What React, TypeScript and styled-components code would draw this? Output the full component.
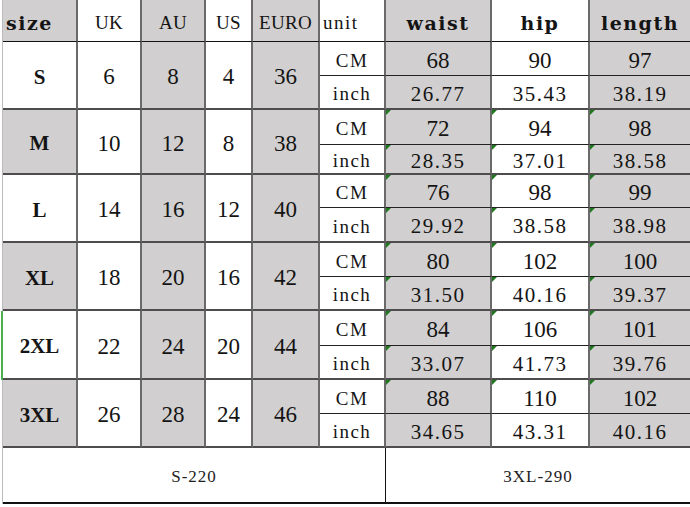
import React from "react";
import styled, { createGlobalStyle, css } from "styled-components";

const GlobalStyle = createGlobalStyle`
	html, body {
		margin: 0;
		padding: 0;
		background: #ffffff;
	}
`;

type Edge = "head" | "sub" | "row" | "foot";
type Face = "bold" | "label" | "headLabel" | "headBold" | "big" | "dec";

const GRAY = "#d1cfcf";

const faces: Record<Face, ReturnType<typeof css>> = {
	bold: css`
		font-family: "Liberation Serif", serif;
		font-weight: bold;
		font-size: 21px;
	`,
	label: css`
		font-family: "Liberation Serif", serif;
		font-size: 19px;
		letter-spacing: 1.5px;
	`,
	headLabel: css`
		font-family: "Liberation Serif", serif;
		font-size: 19px;
		letter-spacing: 0.3px;
	`,
	headBold: css`
		font-family: "DejaVu Serif", serif;
		font-weight: bold;
		font-size: 19px;
		letter-spacing: 1.5px;
	`,
	big: css`
		font-family: "Liberation Serif", serif;
		font-size: 23px;
	`,
	dec: css`
		font-family: "Liberation Serif", serif;
		font-size: 21px;
		letter-spacing: 1.5px;
	`,
};

const edges: Record<Edge, string> = {
	head: "1px solid #111",
	sub: "1px solid #222",
	row: "2px solid #4d4d4d",
	foot: "2px solid #111",
};

const Sheet = styled.div`
	margin-left: 2px;
	border-left: 1px solid #bcbcbc;
	display: grid;
	grid-template-columns: 75px 64px 64px 47px 67px 66px 106px 98px 100px;
	grid-template-rows: 42px 34px 34px 35px 30px 33px 35px 34px 34px 35px 34px 34px 34px 56px;
	color: #141414;
	position: relative;
`;

const Cell = styled.div<{
	$shade?: boolean;
	$edge: Edge;
	$face: Face;
	$last?: boolean;
	$span?: boolean;
	$flag?: boolean;
	$align?: "left" | "center";
}>`
	box-sizing: border-box;
	display: flex;
	align-items: center;
	justify-content: ${(p) => (p.$align === "left" ? "flex-start" : "center")};
	padding: 4px 0 0 ${(p) => (p.$align === "left" ? "3px" : "0")};
	background: ${(p) => (p.$shade ? GRAY : "#ffffff")};
	border-bottom: ${(p) => edges[p.$edge]};
	border-right: ${(p) => (p.$last ? "none" : "2px solid #6a6a6a")};
	grid-row: ${(p) => (p.$span ? "span 2" : "auto")};
	position: relative;
	white-space: nowrap;
	${(p) => faces[p.$face]}

	${(p) =>
		p.$flag &&
		css`
			&::before {
				content: "";
				position: absolute;
				top: 0;
				left: 0;
				border-top: 5px solid #1f7a1f;
				border-right: 5px solid transparent;
			}
		`}
`;

const Footer = styled.div<{ $from: number; $to: number; $divider?: boolean }>`
	box-sizing: border-box;
	grid-column: ${(p) => p.$from} / ${(p) => p.$to};
	display: flex;
	align-items: center;
	justify-content: center;
	padding-top: 4px;
	background: #ffffff;
	border-bottom: ${edges.foot};
	border-right: ${(p) => (p.$divider ? "1px solid #111" : "none")};
	font-family: "Liberation Serif", serif;
	font-size: 17px;
	letter-spacing: 1px;
	color: #222;
`;

const SelectMark = styled.div`
	position: absolute;
	left: -2px;
	top: 311px;
	width: 2px;
	height: 69px;
	background: #4caf50;
`;

const sizes = [
	{ size: "S", uk: "6", au: "8", us: "4", euro: "36", cm: ["68", "90", "97"], inch: ["26.77", "35.43", "38.19"] },
	{ size: "M", uk: "10", au: "12", us: "8", euro: "38", cm: ["72", "94", "98"], inch: ["28.35", "37.01", "38.58"] },
	{ size: "L", uk: "14", au: "16", us: "12", euro: "40", cm: ["76", "98", "99"], inch: ["29.92", "38.58", "38.98"] },
	{ size: "XL", uk: "18", au: "20", us: "16", euro: "42", cm: ["80", "102", "100"], inch: ["31.50", "40.16", "39.37"] },
	{ size: "2XL", uk: "22", au: "24", us: "20", euro: "44", cm: ["84", "106", "101"], inch: ["33.07", "41.73", "39.76"] },
	{ size: "3XL", uk: "26", au: "28", us: "24", euro: "46", cm: ["88", "110", "102"], inch: ["34.65", "43.31", "40.16"] },
];

const heads: { label: string; face: Face; shade: boolean; align?: "left" }[] = [
	{ label: "size", face: "headBold", shade: true, align: "left" },
	{ label: "UK", face: "headLabel", shade: false },
	{ label: "AU", face: "headLabel", shade: true },
	{ label: "US", face: "headLabel", shade: false },
	{ label: "EURO", face: "headLabel", shade: true },
	{ label: "unit", face: "label", shade: false, align: "left" },
	{ label: "waist", face: "headBold", shade: true },
	{ label: "hip", face: "headBold", shade: false },
	{ label: "length", face: "headBold", shade: true },
];

const measureShade = [true, false, true];

const SizeChart: React.FC = () => {
	return (
		<Sheet>
			{heads.map((h, i) => (
				<Cell key={h.label} $edge="head" $face={h.face} $shade={h.shade} $align={h.align} $last={i === 8}>
					{h.label}
				</Cell>
			))}

			{sizes.map((s, idx) => (
				<React.Fragment key={s.size}>
					<Cell $span $edge="row" $face="bold" $shade={idx % 2 === 1}>
						{s.size}
					</Cell>
					<Cell $span $edge="row" $face="big">
						{s.uk}
					</Cell>
					<Cell $span $edge="row" $face="big" $shade>
						{s.au}
					</Cell>
					<Cell $span $edge="row" $face="big">
						{s.us}
					</Cell>
					<Cell $span $edge="row" $face="big" $shade>
						{s.euro}
					</Cell>

					<Cell $edge="sub" $face="label">
						CM
					</Cell>
					{s.cm.map((v, i) => (
						<Cell key={"c" + i} $edge="sub" $face="big" $shade={measureShade[i]} $last={i === 2} $flag={idx > 0}>
							{v}
						</Cell>
					))}

					<Cell $edge="row" $face="label">
						inch
					</Cell>
					{s.inch.map((v, i) => (
						<Cell key={"i" + i} $edge="row" $face="dec" $shade={measureShade[i]} $last={i === 2} $flag={idx > 0 && idx < 5}>
							{v}
						</Cell>
					))}
				</React.Fragment>
			))}

			<Footer $from={1} $to={7} $divider>
				S-220
			</Footer>
			<Footer $from={7} $to={10}>
				3XL-290
			</Footer>

			<SelectMark />
		</Sheet>
	);
};

const App: React.FC = () => {
	return (
		<>
			<GlobalStyle />
			<SizeChart />
		</>
	);
};

export default App;
